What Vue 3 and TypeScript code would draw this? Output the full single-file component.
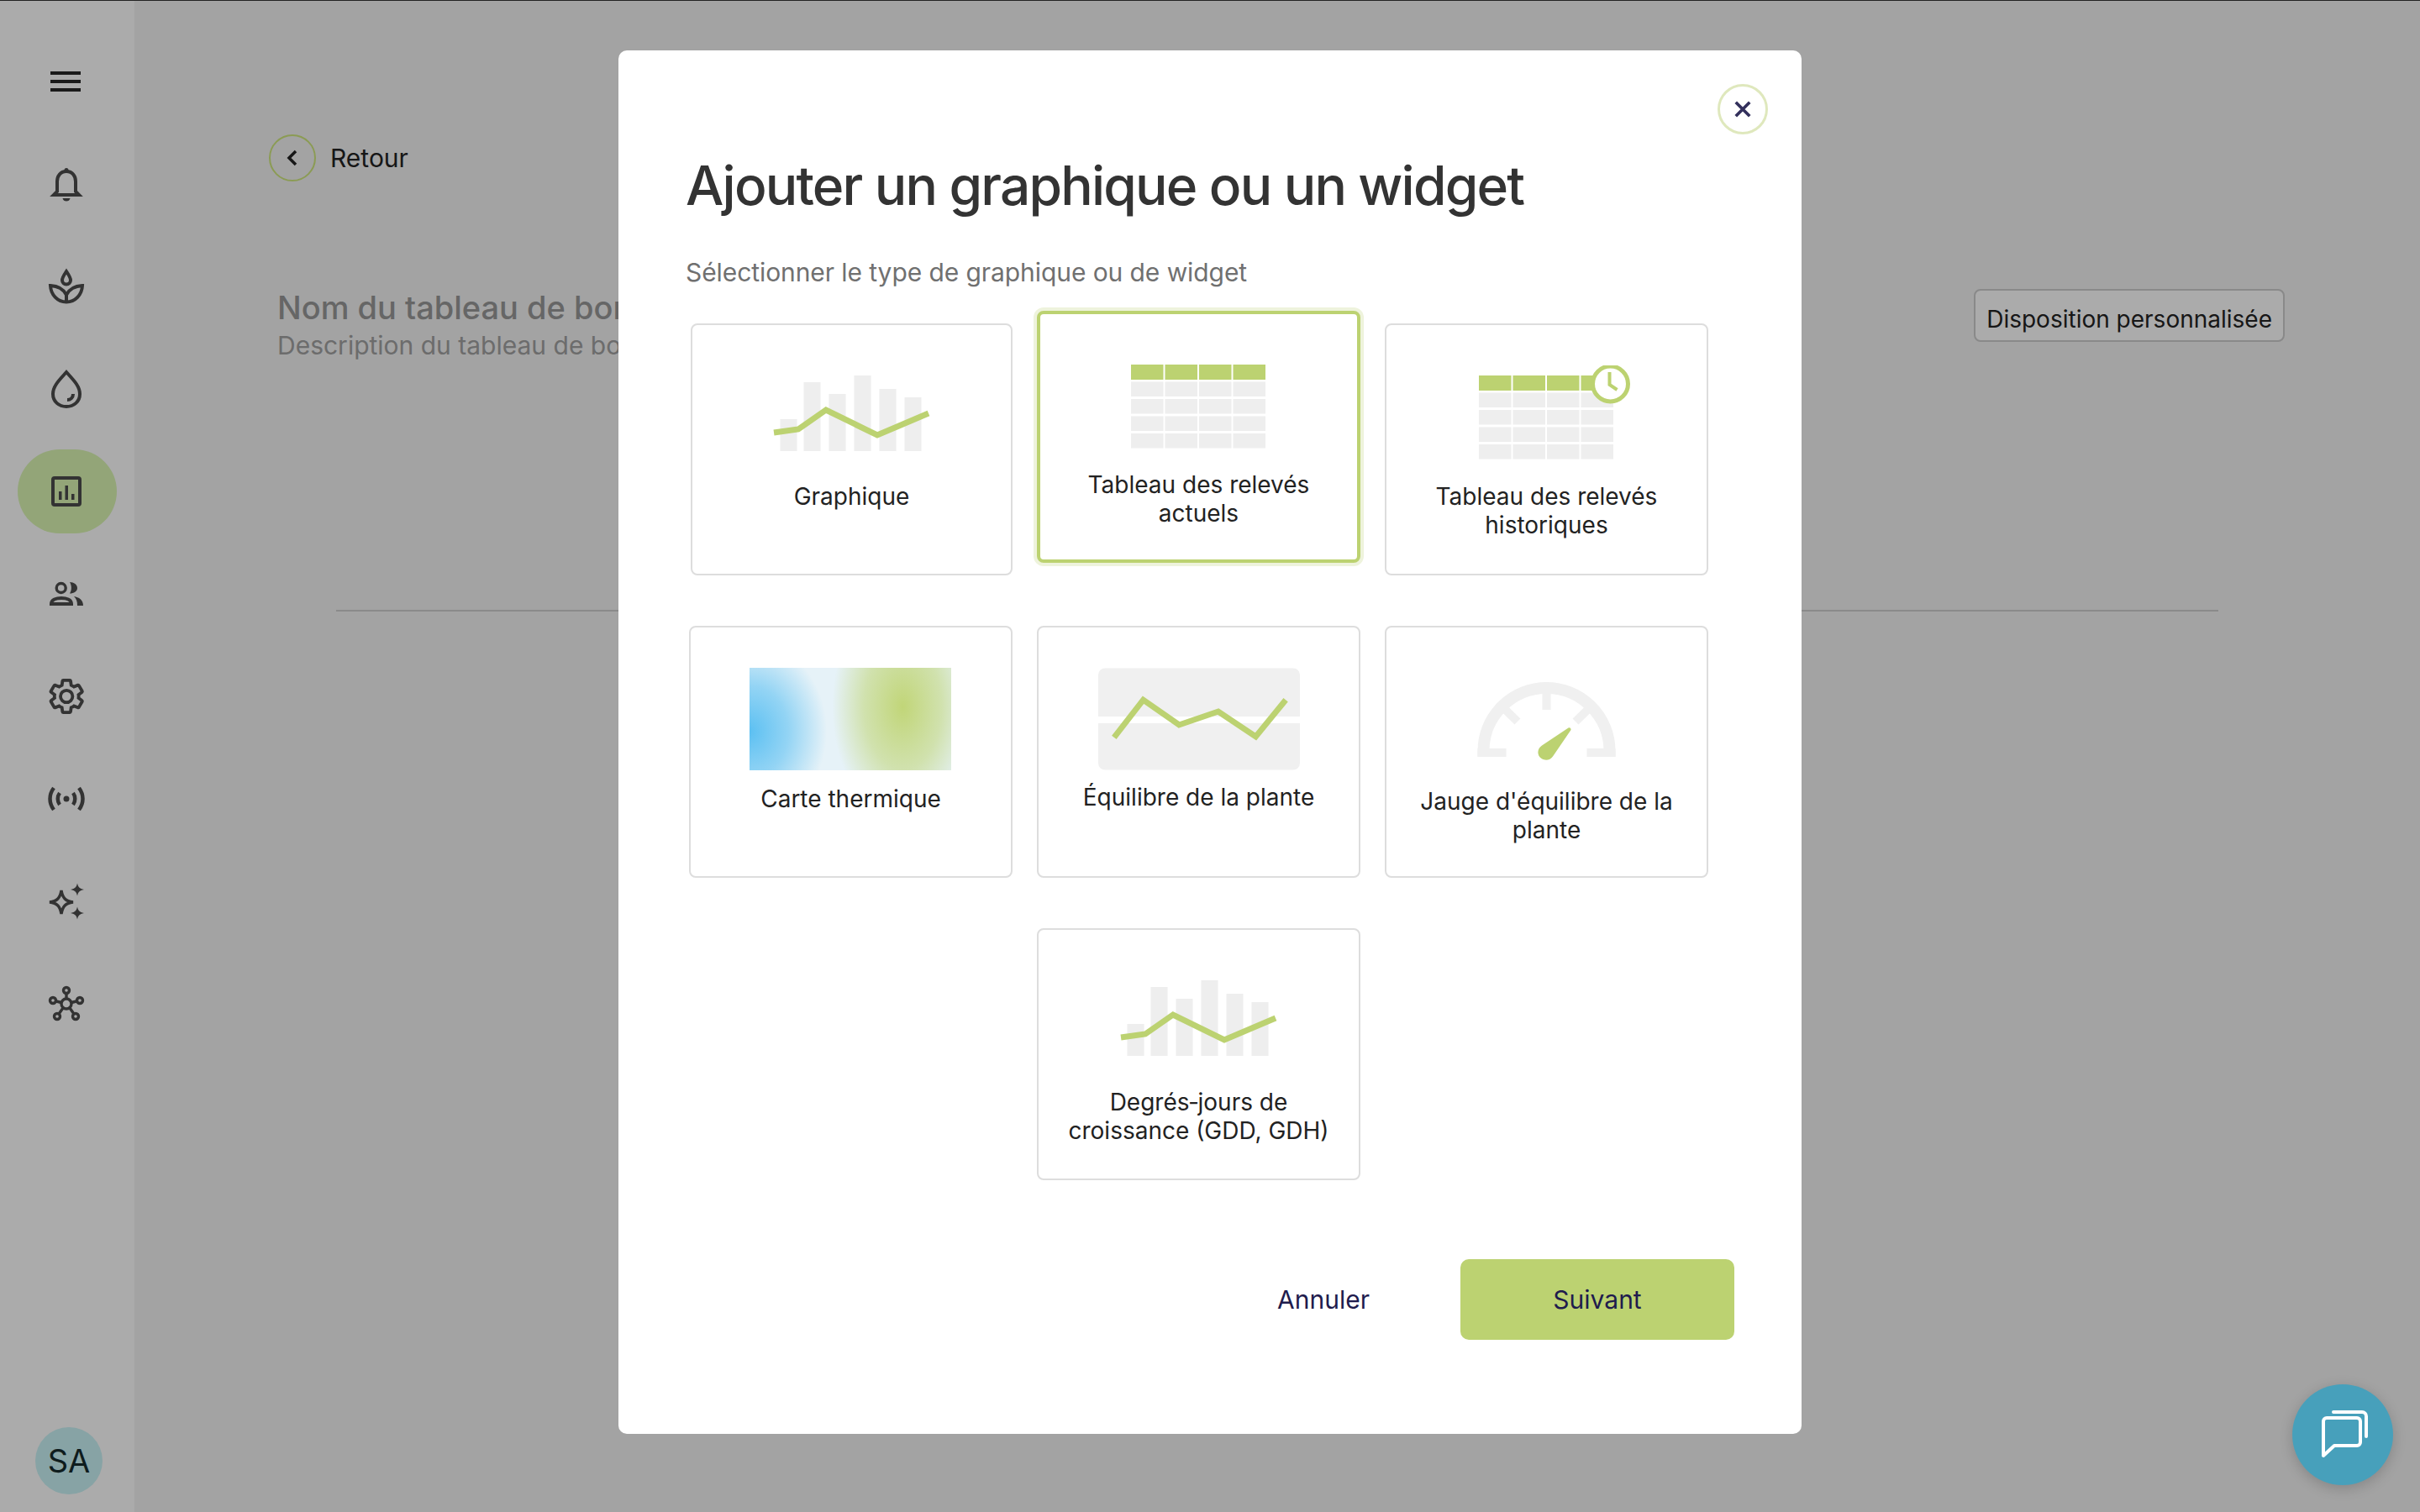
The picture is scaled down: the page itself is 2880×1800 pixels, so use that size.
<template>
  <div class="page">
    <!-- Sidebar -->
    <aside class="sidebar">
      <nav class="sidebar__nav">
        <div class="nav-item">
          <svg class="burger" viewBox="0 0 36 24"><path d="M0 2h36M0 12h36M0 22h36" /></svg>
        </div>
        <div v-for="item in navItems" :key="item" class="nav-item" :class="{ 'nav-item--active': item === 'chart' }">
          <svg v-if="item === 'bell'" class="icon" viewBox="0 0 48 48">
            <path d="M23 9C15.500 9 12 15 12 21v12l-4 4h30l-4-4V21c0-6-3.500-12-11-12z" />
            <circle class="solid" cx="23" cy="7.500" r="2.500" />
            <path class="solid" d="M18.500 41h9c-.5 2.500-2.300 3.500-4.500 3.500s-4-1-4.500-3.500z" />
          </svg>
          <svg v-else-if="item === 'plant'" class="icon" viewBox="0 0 48 48">
            <path d="M23 6c-3 4.500-5 7.500-5 10.500 0 3 2.200 5 5 5s5-2 5-5c0-3-2-6-5-10.500z" />
            <path d="M4 23c.5 11 8.500 19.500 19 19.500S41.500 34 42 23c-9 .5-15.500 4-19 11-3.500-7-10-10.500-19-11z" />
            <path d="M23 34v8" />
          </svg>
          <svg v-else-if="item === 'drop'" class="icon" viewBox="0 0 48 48">
            <path d="M23 4C16 12 7 20 7 30c0 9 7 15 16 15s16-6 16-15C39 20 30 12 23 4z" />
            <path d="M31 30c0 4-3 7-7 7" />
          </svg>
          <svg v-else-if="item === 'chart'" class="icon" viewBox="0 0 48 48">
            <rect x="7" y="8" width="32" height="32" rx="2" />
            <path class="solid" d="M14 24h3.500v10H14zM21.500 17H25v17h-3.500zM29 27h3.500v7H29z" />
          </svg>
          <svg v-else-if="item === 'people'" class="icon" viewBox="0 0 48 48">
            <circle class="medium" cx="16.700" cy="17" r="5.500" />
            <path d="M5 36c0-5 6-7 12-7s12 2 12 7z" />
            <path class="solid" d="M27 10c5 0 9 3 9 7s-4 6.500-9 6.500c2.500-3.500 2.500-9.500 0-13.500zM32 27c6 1 11 4 11 11h-7c0-5-1-8-4-11z" />
          </svg>
          <svg v-else-if="item === 'gear'" class="icon" viewBox="0 0 24 24">
            <path class="thin" transform="translate(-.4 0)" d="M19.140 12.940c.04-.3.06-.61.06-.94 0-.32-.02-.64-.07-.94l2.030-1.580c.18-.14.23-.41.12-.61l-1.920-3.320c-.12-.22-.37-.29-.59-.22l-2.390.96c-.5-.38-1.030-.7-1.620-.94l-.36-2.540c-.04-.24-.24-.41-.48-.41h-3.840c-.24 0-.43.17-.47.41l-.36 2.540c-.59.24-1.130.57-1.620.94l-2.390-.96c-.22-.08-.47 0-.59.22L2.740 8.870c-.12.21-.08.47.12.61l2.030 1.580c-.05.3-.09.63-.09.94s.02.64.07.94l-2.030 1.580c-.18.14-.23.41-.12.61l1.920 3.320c.12.22.37.29.59.22l2.390-.96c.5.38 1.030.7 1.620.94l.36 2.540c.05.24.24.41.48.41h3.840c.24 0 .44-.17.47-.41l.36-2.540c.59-.24 1.130-.56 1.620-.94l2.390.96c.22.08.47 0 .59-.22l1.920-3.320c.12-.22.07-.47-.12-.61l-2.010-1.580zM12 15.600c-1.980 0-3.600-1.620-3.600-3.600s1.620-3.600 3.600-3.600 3.600 1.620 3.600 3.600-1.620 3.600-3.600 3.600z" />
          </svg>
          <svg v-else-if="item === 'radio'" class="icon" viewBox="0 0 48 48">
            <circle class="solid" cx="23" cy="24" r="3.500" />
            <path class="heavy" d="M8 11c-6 8-6 18 0 26M38 11c6 8 6 18 0 26M15 17c-3 4-3 10 0 14M31 17c3 4 3 10 0 14" />
          </svg>
          <svg v-else-if="item === 'sparkle'" class="icon" viewBox="0 0 48 48">
            <path class="medium" d="M17 11c1.500 9 5 13 14 14-9 1-12.500 5-14 14-1.500-9-5-13-14-14 9-1 12.500-5 14-14z" />
            <path class="solid" d="M36 2.500c1 4.500 2.500 6.500 8 7.500-5.500 1-7 3-8 7.500-1-4.500-2.500-6.500-8-7.500 5.500-1 7-3 8-7.500zM36 30.500c1 4.500 2.500 6.500 8 7.500-5.500 1-7 3-8 7.500-1-4.500-2.500-6.500-8-7.500 5.500-1 7-3 8-7.500z" />
          </svg>
          <svg v-else-if="item === 'network'" class="icon" viewBox="0 0 48 48">
            <g class="medium">
              <circle cx="23" cy="24" r="6" />
              <circle cx="23" cy="8" r="3.500" />
              <circle cx="7" cy="20" r="3.500" />
              <circle cx="39" cy="20" r="3.500" />
              <circle cx="12" cy="39" r="3.500" />
              <circle cx="34" cy="39" r="3.500" />
              <path d="M23 12v6M11 21l6 1.500M35 21l-6 1.500M14 36l5-7M32 36l-5-7" />
            </g>
          </svg>
        </div>
      </nav>
      <div class="avatar">SA</div>
    </aside>

    <!-- Page behind the dialog -->
    <main class="content">
      <div class="back">
        <span class="back__circle">
          <svg viewBox="0 0 20 24" class="back__chevron"><path d="M14 4l-8 8 8 8" /></svg>
        </span>
        <span>Retour</span>
      </div>
      <div class="head">
        <div>
          <h1 class="head__title">Nom du tableau de bord</h1>
          <p class="head__desc">Description du tableau de bord</p>
        </div>
        <button class="layout-btn">Disposition personnalisée</button>
      </div>
      <hr class="rule" />
    </main>

    <!-- Dialog -->
    <div class="overlay">
      <section class="modal">
        <button class="modal__close" aria-label="Fermer">
          <svg viewBox="0 0 24 24"><path d="M3 3l18 18M21 3L3 21" /></svg>
        </button>
        <h2 class="modal__title">Ajouter un graphique ou un widget</h2>
        <p class="modal__sub">Sélectionner le type de graphique ou de widget</p>

        <div class="cards">
          <article
            v-for="card in cards"
            :key="card.label"
            class="card"
            :class="[`card--${card.kind}`, { 'card--selected': card.selected }]"
          >
            <div class="card__image">
              <svg v-if="card.kind === 'chart' || card.kind === 'growth'" viewBox="0 0 240 122">
                <rect v-for="bar in bars" :key="bar.x" class="grey" :x="bar.x" :y="bar.y" width="20" :height="102 - bar.y" />
                <polyline class="line" points="27,80 56,76 89,53 150,83 211,57" />
              </svg>
              <svg v-else-if="card.kind === 'current' || card.kind === 'history'" viewBox="0 0 240 122">
                <g :transform="card.kind === 'current' ? 'translate(0 14)' : 'translate(0 12)'">
                  <rect v-for="x in tableCols" :key="x" class="green" :x="x" y="0" width="38.500" height="18" />
                  <template v-for="y in tableRows" :key="y">
                    <rect v-for="x in tableCols" :key="x" class="grey" :x="x" :y="y" width="38.500" height="17.500" />
                  </template>
                </g>
                <g v-if="card.kind === 'history'">
                  <circle class="clock" cx="195.500" cy="22" r="21" />
                  <polyline class="hand" points="194.500,8 194.500,23 203.500,29" />
                </g>
              </svg>
              <div v-else-if="card.kind === 'heat'" class="heat"></div>
              <svg v-else-if="card.kind === 'balance'" viewBox="0 0 242 122">
                <path class="panel" d="M0 8a8 8 0 0 1 8-8h226a8 8 0 0 1 8 8v50H0zM0 66h242v48a8 8 0 0 1-8 8H8a8 8 0 0 1-8-8z" />
                <polyline class="line" points="19,83 54,38 97,68 144,52 189,82 225,38" />
              </svg>
              <svg v-else-if="card.kind === 'gauge'" viewBox="0 0 240 122">
                <path class="dial" d="M44.500 106V99a75 75 0 0 1 150 0v7" />
                <path class="ticks" d="M37.500 101h34M167.500 101h34M119.500 24v26M66.500 46L85 64M172.500 46L154 64" />
                <path class="needle" d="M145.500 71.500c1.500-1 3.500.5 3 2.500L127 105.500c-3 4.500-9 5.500-13.500 2.500-5.500-3.500-5.500-11.500.5-15.500z" />
              </svg>
            </div>
            <div class="card__label">
              <span v-for="line in card.label.split('|')" :key="line">{{ line }}</span>
            </div>
          </article>
        </div>

        <footer class="modal__actions">
          <button class="btn-text">Annuler</button>
          <button class="btn-primary">Suivant</button>
        </footer>
      </section>
    </div>

    <button class="chat" aria-label="Messages">
      <svg viewBox="0 0 60 60"><path d="M9 14a4 4 0 0 1 4-4h36a4 4 0 0 1 4 4v25a4 4 0 0 1-4 4H22L9 55zM21 3h34a5 5 0 0 1 5 5v24" transform="translate(-2 0)" /></svg>
    </button>
  </div>
</template>

<script setup lang="ts">
type CardKind = 'chart' | 'current' | 'history' | 'heat' | 'balance' | 'gauge' | 'growth'

interface Card {
  kind: CardKind
  label: string
  selected?: boolean
}

const navItems = ['bell', 'plant', 'drop', 'chart', 'people', 'gear', 'radio', 'sparkle', 'network']

const cards: Card[] = [
  { kind: 'chart', label: 'Graphique' },
  { kind: 'current', label: 'Tableau des relevés|actuels', selected: true },
  { kind: 'history', label: 'Tableau des relevés|historiques' },
  { kind: 'heat', label: 'Carte thermique' },
  { kind: 'balance', label: 'Équilibre de la plante' },
  { kind: 'gauge', label: "Jauge d'équilibre de la|plante" },
  { kind: 'growth', label: 'Degrés\u2011jours de|croissance (GDD, GDH)' }
]

const bars = [
  { x: 34.5, y: 64 },
  { x: 62.5, y: 20 },
  { x: 92.5, y: 34 },
  { x: 122.5, y: 12 },
  { x: 152.5, y: 28 },
  { x: 182.5, y: 38 }
]

const tableCols = [39, 79.5, 120, 160.5]
const tableRows = [20.5, 41, 61.5, 82]
</script>

<style>
html,
body {
  margin: 0;
  padding: 0;
}
</style>

<style scoped>
.page {
  display: flex;
  min-height: 1800px;
  background: #f3f3f3;
  font-family: Inter, "Liberation Sans", sans-serif;
  color: #232323;
}

/* Sidebar */
.sidebar {
  width: 160px;
  height: 1800px;
  flex-shrink: 0;
  background: #fff;
  display: flex;
  flex-direction: column;
  justify-content: space-between;
  box-sizing: border-box;
  padding: 47px 21px 21px;
}

.sidebar__nav {
  display: flex;
  flex-direction: column;
  gap: 22px;
}

.nav-item {
  height: 100px;
  border-radius: 50px;
  display: flex;
  align-items: center;
  justify-content: center;
}

.nav-item--active {
  background: #dbf6b4;
}

.burger {
  width: 36px;
  height: 24px;
  margin-left: -5px;
  fill: none;
  stroke: #282828;
  stroke-width: 4;
}

.icon {
  width: 48px;
  height: 48px;
  fill: none;
  stroke: #4c4c4c;
  stroke-width: 4;
}

.icon .solid {
  fill: #4c4c4c;
  stroke: none;
}

.icon .thin {
  stroke-width: 1.9;
}

.icon .medium {
  stroke-width: 3.4;
}

.icon .heavy {
  stroke-width: 4.5;
}

.avatar {
  width: 80px;
  height: 80px;
  border-radius: 50%;
  margin-left: 21px;
  background: #c9f3f6;
  color: #152a2c;
  font-size: 38px;
  display: flex;
  align-items: center;
  justify-content: center;
}

/* Page behind the dialog */
.content {
  flex: 1;
  min-width: 0;
  padding: 161px 161px 0 160px;
}

.back {
  display: flex;
  align-items: center;
  gap: 17px;
  font-size: 30px;
  height: 54px;
}

.back__circle {
  width: 56px;
  height: 56px;
  flex-shrink: 0;
  box-sizing: border-box;
  border: 2px solid #cfe87e;
  border-radius: 50%;
  display: flex;
  align-items: center;
  justify-content: center;
}

.back__chevron {
  width: 20px;
  height: 24px;
  fill: none;
  stroke: #232323;
  stroke-width: 3.5;
}

.head {
  display: flex;
  justify-content: space-between;
  align-items: flex-start;
  margin: 127px 0 0 10px;
}

.head__title {
  margin: 0;
  font-size: 38px;
  line-height: 48px;
  font-weight: 500;
  color: #989898;
}

.head__desc {
  margin: 1px 0 0;
  font-size: 30px;
  line-height: 40px;
  color: #a1a1a1;
}

.layout-btn {
  margin-top: 2px;
  height: 63px;
  padding: 8px 13px 0;
  background: #fff;
  border: 2px solid #ccc;
  border-radius: 8px;
  font: 400 28px Inter, "Liberation Sans", sans-serif;
  color: #232323;
}

.rule {
  margin: 295px 79px 0 80px;
  border: 0;
  border-top: 2px solid #cecece;
}

/* Dialog */
.overlay {
  position: fixed;
  inset: 0;
  box-sizing: border-box;
  padding-top: 59px;
  border-top: 1px solid #222;
  background: rgba(0, 0, 0, 0.33);
  display: flex;
  justify-content: center;
  align-items: flex-start;
}

.modal {
  position: relative;
  width: 1408px;
  height: 1647px;
  box-sizing: border-box;
  padding: 121px 80px 0;
  background: #fff;
  border-radius: 10px;
}

.modal__close {
  position: absolute;
  top: 40px;
  right: 40px;
  width: 60px;
  height: 60px;
  padding: 0;
  background: #fff;
  border: 3px solid #dfe8bd;
  border-radius: 50%;
  display: flex;
  align-items: center;
  justify-content: center;
}

.modal__close svg {
  width: 22px;
  height: 22px;
  fill: none;
  stroke: #33305c;
  stroke-width: 4;
}

.modal__title {
  margin: 0;
  font-size: 64px;
  line-height: 80px;
  font-weight: 500;
  letter-spacing: -1.8px;
  color: #333;
}

.modal__sub {
  margin: 43px 0 0;
  font-size: 30px;
  line-height: 40px;
  letter-spacing: -0.08px;
  color: #707070;
}

.cards {
  display: grid;
  grid-template-columns: repeat(3, 385px);
  column-gap: 29px;
  row-gap: 60px;
  margin: 41px 0 0 4px;
}

.card {
  height: 300px;
  box-sizing: border-box;
  padding-top: 48px;
  background: #fff;
  border: 2px solid #ddd;
  border-radius: 8px;
  display: flex;
  flex-direction: column;
  align-items: center;
}

.card--selected {
  transform: translateY(-15px);
  padding-top: 46px;
  border: 4px solid #bcd271;
  box-shadow: 0 0 0 4px #eef3dc;
}

.card--chart {
  margin-left: 2px;
}

.card--growth {
  grid-column: 2;
}

.card__image {
  height: 122px;
  display: flex;
  justify-content: center;
}

.card__image svg {
  height: 122px;
  width: 240px;
  flex-shrink: 0;
}

.grey {
  fill: #eee;
}

.green {
  fill: #bcd271;
}

.line {
  fill: none;
  stroke: #bcd271;
  stroke-width: 7;
}

.panel {
  fill: #f0f0f0;
}

.clock {
  fill: #fff;
  stroke: #bcd271;
  stroke-width: 5;
}

.hand {
  fill: none;
  stroke: #bcd271;
  stroke-width: 4;
}

.dial {
  fill: none;
  stroke: #f0f0f0;
  stroke-width: 14;
}

.ticks {
  fill: none;
  stroke: #f0f0f0;
  stroke-width: 10;
}

.needle {
  fill: #bcd271;
}

.heat {
  width: 240px;
  height: 122px;
  margin-left: -2px;
  background:
    radial-gradient(ellipse 84px 135px at 76% 38%, rgba(191, 212, 113, 0.95) 0%, rgba(191, 212, 113, 0.55) 55%, rgba(191, 212, 113, 0) 100%),
    radial-gradient(ellipse 92px 108px at 0% 62%, #5cc0f2 0%, rgba(92, 192, 242, 0.6) 50%, rgba(92, 192, 242, 0) 100%),
    #e6f2f8;
}

.card__label {
  margin-top: 18px;
  font-size: 28px;
  line-height: 34px;
  color: #222;
  text-align: center;
  display: flex;
  flex-direction: column;
}

/* labels do not sit on the same line from card to card */
.card--chart .card__label,
.card--history .card__label,
.card--heat .card__label {
  margin-top: 17px;
}

.card--balance .card__label {
  margin-top: 15px;
}

.card--gauge .card__label {
  margin-top: 20px;
}

.modal__actions {
  position: absolute;
  right: 80px;
  bottom: 112px;
  display: flex;
  align-items: center;
  gap: 108px;
}

.btn-text {
  padding: 0;
  background: none;
  border: 0;
  font: 400 30px Inter, "Liberation Sans", sans-serif;
  color: #1f1c4d;
}

.btn-primary {
  width: 326px;
  height: 96px;
  background: #bcd271;
  border: 0;
  border-radius: 10px;
  font: 400 30px Inter, "Liberation Sans", sans-serif;
  color: #1f1c4d;
}

.chat {
  position: fixed;
  right: 32px;
  bottom: 32px;
  width: 120px;
  height: 120px;
  padding: 0;
  border: 0;
  border-radius: 50%;
  background: #47a0bb;
  box-shadow: 0 4px 16px rgba(0, 0, 0, 0.18);
  display: flex;
  align-items: center;
  justify-content: center;
}

.chat svg {
  width: 60px;
  height: 60px;
  fill: none;
  stroke: #fff;
  stroke-width: 4;
  stroke-linecap: round;
  stroke-linejoin: round;
}
</style>
